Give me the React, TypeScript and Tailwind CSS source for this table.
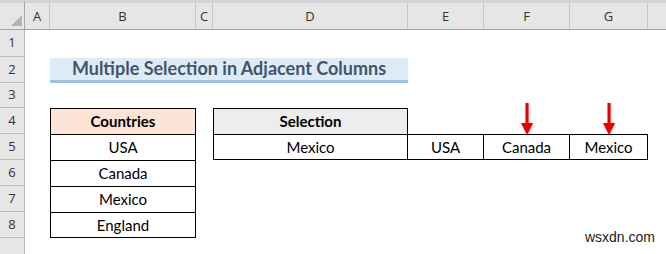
import React from "react";

const letters = ["A", "B", "C", "D", "E", "F", "G", ""];

function RowHead({ n }: { n: string }) {
  return (
    <div className="flex items-center justify-center border-r border-b border-[#bcbcbc] bg-[#e6e6e6] text-[13px] text-[#333] [font-family:'Open_Sans',sans-serif]">
      {n}
    </div>
  );
}

function Arrow() {
  return (
    <svg
      className="pointer-events-none absolute left-1/2 top-[-5px] -translate-x-1/2 drop-shadow-[1px_1px_1px_rgba(0,0,0,0.25)]"
      width="14"
      height="33"
      viewBox="0 0 14 33"
    >
      <rect x="5.5" y="0" width="3" height="21" fill="#e60000" />
      <polygon points="1,20 13,20 7,32" fill="#e60000" />
    </svg>
  );
}

const cell = "flex items-center justify-center text-[15px] text-black";

export default function App() {
  return (
    <div className="relative h-[254px] w-[666px] overflow-hidden bg-white [font-family:Lato,'Liberation_Sans',sans-serif]">
      <div className="grid h-full grid-cols-[25px_25px_146px_17px_195px_76px_86px_78px_1fr] grid-rows-[30px_27px_26px_25px_26px_26px_26px_26px_26px_1fr]">
        {/* column headers */}
        <div className="relative border-r border-b border-t-[3px] border-[#a6a6a6] border-t-[#d4d4d4] bg-[#e6e6e6]">
          <svg className="absolute bottom-[3px] right-[2px]" width="11" height="11" viewBox="0 0 11 11">
            <polygon points="11,0 11,11 0,11" fill="#b4b4b4" />
          </svg>
        </div>
        {letters.map((l, i) => (
          <div
            key={i}
            className={`flex items-center justify-center border-b border-t-[3px] border-b-[#a6a6a6] border-t-[#d4d4d4] bg-[#e6e6e6] pt-[1px] text-[13px] text-[#333] [font-family:'Open_Sans',sans-serif] ${
              l ? "border-r border-r-[#c6c6c6]" : ""
            }`}
          >
            {l}
          </div>
        ))}

        {/* row 1 */}
        <RowHead n="1" />
        <div className="col-span-8" />

        {/* row 2 */}
        <RowHead n="2" />
        <div />
        <div className="col-span-3 mt-[1px] flex items-center justify-center border-b-[3px] border-[#9dc3e6] bg-[#ddebf7] pb-[1px] text-[18px] font-bold text-[#44546a]">
          Multiple Selection in Adjacent Columns
        </div>
        <div className="col-span-4" />

        {/* row 3 */}
        <RowHead n="3" />
        <div className="col-span-8" />

        {/* row 4 */}
        <RowHead n="4" />
        <div />
        <div className={`${cell} border-x border-t border-black bg-[#fce4d6] font-bold`}>Countries</div>
        <div />
        <div className={`${cell} border-x border-t border-black bg-[#ededed] font-bold`}>Selection</div>
        <div />
        <div className="relative">
          <Arrow />
        </div>
        <div className="relative">
          <Arrow />
        </div>
        <div />

        {/* row 5 */}
        <RowHead n="5" />
        <div />
        <div className={`${cell} border-x border-t border-black`}>USA</div>
        <div />
        <div className={`${cell} border border-black`}>Mexico</div>
        <div className={`${cell} border-y border-r border-black`}>USA</div>
        <div className={`${cell} border-y border-r border-black`}>Canada</div>
        <div className={`${cell} border-y border-r border-black`}>Mexico</div>
        <div />

        {/* row 6 */}
        <RowHead n="6" />
        <div />
        <div className={`${cell} border-x border-t border-black`}>Canada</div>
        <div className="col-span-6" />

        {/* row 7 */}
        <RowHead n="7" />
        <div />
        <div className={`${cell} border-x border-t border-black`}>Mexico</div>
        <div className="col-span-6" />

        {/* row 8 */}
        <RowHead n="8" />
        <div />
        <div className={`${cell} border border-black`}>England</div>
        <div className="col-span-6" />

        {/* row 9 */}
        <div className="border-r border-[#bcbcbc] bg-[#e6e6e6]" />
        <div className="col-span-8" />
      </div>

      <span className="absolute bottom-[6px] right-[11px] text-[14px] text-[#222] [font-family:'Liberation_Sans',sans-serif]">
        wsxdn.com
      </span>
    </div>
  );
}
